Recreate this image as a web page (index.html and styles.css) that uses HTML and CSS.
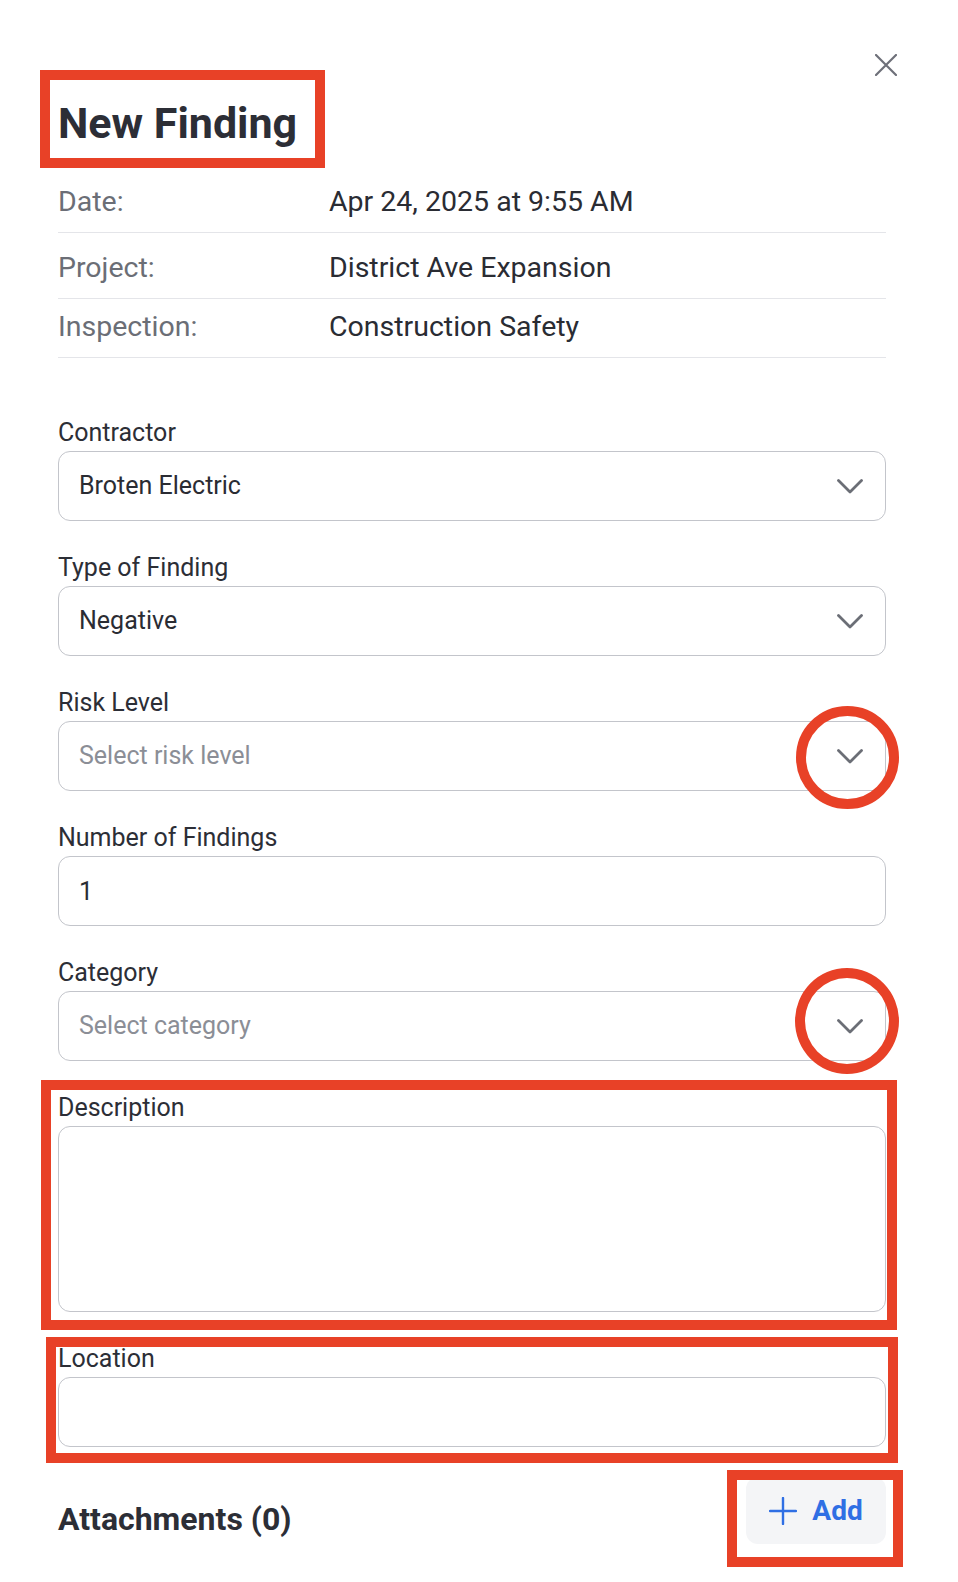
FILE: index.html
```html
<!DOCTYPE html>
<html lang="en">
<head>
<meta charset="utf-8">
<title>New Finding</title>
<link rel="stylesheet" href="styles.css">
</head>
<body>
<div class="page">
  <button class="close" aria-label="Close">
    <svg width="22" height="22" viewBox="0 0 22 22"><path d="M1 1 L21 21 M21 1 L1 21" fill="none" stroke="#6e7079" stroke-width="2.2" stroke-linecap="round"/></svg>
  </button>

  <h1 class="title">New Finding</h1>

  <div class="info">
    <div class="info-row"><span class="info-label">Date:</span><span class="info-value">Apr 24, 2025 at 9:55 AM</span></div>
    <div class="info-row info-row-project"><span class="info-label">Project:</span><span class="info-value">District Ave Expansion</span></div>
    <div class="info-row"><span class="info-label">Inspection:</span><span class="info-value">Construction Safety</span></div>
  </div>

  <form class="form">
    <div class="field">
      <label class="field-label">Contractor</label>
      <div class="control select">
        <span class="select-value">Broten Electric</span>
        <svg class="chevron" width="26" height="15" viewBox="0 0 26 15"><polyline points="1.5,1.5 13,13 24.5,1.5" fill="none" stroke="#6b6e76" stroke-width="2.8" stroke-linecap="round" stroke-linejoin="round"/></svg>
      </div>
    </div>
    <div class="field">
      <label class="field-label">Type of Finding</label>
      <div class="control select">
        <span class="select-value">Negative</span>
        <svg class="chevron" width="26" height="15" viewBox="0 0 26 15"><polyline points="1.5,1.5 13,13 24.5,1.5" fill="none" stroke="#6b6e76" stroke-width="2.8" stroke-linecap="round" stroke-linejoin="round"/></svg>
      </div>
    </div>
    <div class="field">
      <label class="field-label">Risk Level</label>
      <div class="control select">
        <span class="select-value placeholder">Select risk level</span>
        <svg class="chevron" width="26" height="15" viewBox="0 0 26 15"><polyline points="1.5,1.5 13,13 24.5,1.5" fill="none" stroke="#6b6e76" stroke-width="2.8" stroke-linecap="round" stroke-linejoin="round"/></svg>
      </div>
    </div>
    <div class="field">
      <label class="field-label">Number of Findings</label>
      <input class="control text-input" type="text" value="1">
    </div>
    <div class="field">
      <label class="field-label">Category</label>
      <div class="control select">
        <span class="select-value placeholder">Select category</span>
        <svg class="chevron" width="26" height="15" viewBox="0 0 26 15"><polyline points="1.5,1.5 13,13 24.5,1.5" fill="none" stroke="#6b6e76" stroke-width="2.8" stroke-linecap="round" stroke-linejoin="round"/></svg>
      </div>
    </div>
    <div class="field">
      <label class="field-label">Description</label>
      <textarea class="control textarea"></textarea>
    </div>
    <div class="field">
      <label class="field-label">Location</label>
      <input class="control text-input" type="text" value="">
    </div>
  </form>

  <div class="attachments">
    <h2 class="attachments-title">Attachments (0)</h2>
    <button class="add-btn" type="button">
      <svg width="28" height="28" viewBox="0 0 28 28"><path d="M14 1 V27 M1 14 H27" fill="none" stroke="#2f6fe4" stroke-width="2.4" stroke-linecap="round"/></svg>
      <span>Add</span>
    </button>
  </div>

  <div class="mark mark-title"></div>
  <div class="mark mark-desc"></div>
  <div class="mark mark-loc"></div>
  <div class="mark mark-add"></div>
  <div class="mark ring ring-risk"></div>
  <div class="mark ring ring-category"></div>
</div>
</body>
</html>
```

FILE: styles.css
```css
* {
  box-sizing: border-box;
}

html, body {
  margin: 0;
  padding: 0;
  background: #ffffff;
}

body {
  font-family: Roboto, "Liberation Sans", Arial, sans-serif;
  color: #2c2e36;
}

.page {
  position: relative;
  width: 958px;
  min-height: 1582px;
  padding: 98px 72px 0 58px;
  overflow: hidden;
}

.close {
  position: absolute;
  left: 875px;
  top: 54px;
  width: 22px;
  height: 22px;
  padding: 0;
  border: 0;
  background: transparent;
  display: block;
}

.close svg {
  display: block;
}

.title {
  margin: 0;
  font-size: 43px;
  line-height: 50px;
  font-weight: 700;
  color: #2c2e36;
  letter-spacing: 0;
}

.info {
  margin-top: 26px;
}

.info-row {
  display: grid;
  grid-template-columns: 271px 1fr;
  font-size: 28.5px;
  line-height: 32px;
  padding: 12px 0 14px;
  border-bottom: 1px solid #e4e5e9;
}

.info-row-project {
  padding-top: 19px;
}

.info-label {
  color: #6b6e76;
}

.info-value {
  color: #2a2c33;
}

.form {
  margin-top: 60px;
  display: flex;
  flex-direction: column;
  gap: 32px;
}

.field {
  display: flex;
  flex-direction: column;
}

.field-label {
  font-size: 25px;
  line-height: 30px;
  margin-bottom: 3px;
  color: #2c2e36;
}

.control {
  width: 100%;
  height: 70px;
  border: 1.5px solid #c3c5cb;
  border-radius: 12px;
  background: #ffffff;
  font-family: inherit;
  font-size: 25px;
  color: #2a2c33;
}

.select {
  display: flex;
  align-items: center;
  justify-content: space-between;
  padding: 0 22px 0 20px;
}

.select-value {
  line-height: 30px;
}

.placeholder {
  color: #8b8e96;
}

.chevron {
  display: block;
  flex: none;
}

.text-input {
  padding: 0 20px;
  outline: none;
}

.textarea {
  height: 186px;
  resize: none;
  padding: 18px 20px;
  outline: none;
  display: block;
}

.attachments {
  margin-top: 30px;
  display: flex;
  justify-content: space-between;
  align-items: flex-start;
}

.attachments-title {
  margin: 23px 0 0;
  font-size: 32px;
  line-height: 38px;
  font-weight: 700;
  color: #2c2e36;
}

.add-btn {
  width: 140px;
  height: 67px;
  border: 0;
  border-radius: 12px;
  background: #f4f5f7;
  display: flex;
  align-items: center;
  justify-content: center;
  gap: 15px;
  padding: 0;
  font-family: inherit;
  font-size: 28px;
  font-weight: 700;
  color: #2f6fe4;
}

.add-btn svg {
  display: block;
  flex: none;
}

.mark {
  position: absolute;
  border: 10px solid #e84127;
  pointer-events: none;
}

.mark-title {
  left: 40px;
  top: 70px;
  width: 285px;
  height: 98px;
}

.mark-desc {
  left: 41px;
  top: 1080px;
  width: 856px;
  height: 250px;
}

.mark-loc {
  left: 46px;
  top: 1337px;
  width: 852px;
  height: 126px;
}

.mark-add {
  left: 727px;
  top: 1470px;
  width: 176px;
  height: 97px;
}

.ring {
  border-radius: 50%;
}

.ring-risk {
  left: 796px;
  top: 706px;
  width: 103px;
  height: 103px;
}

.ring-category {
  left: 795px;
  top: 968px;
  width: 104px;
  height: 106px;
}
```
